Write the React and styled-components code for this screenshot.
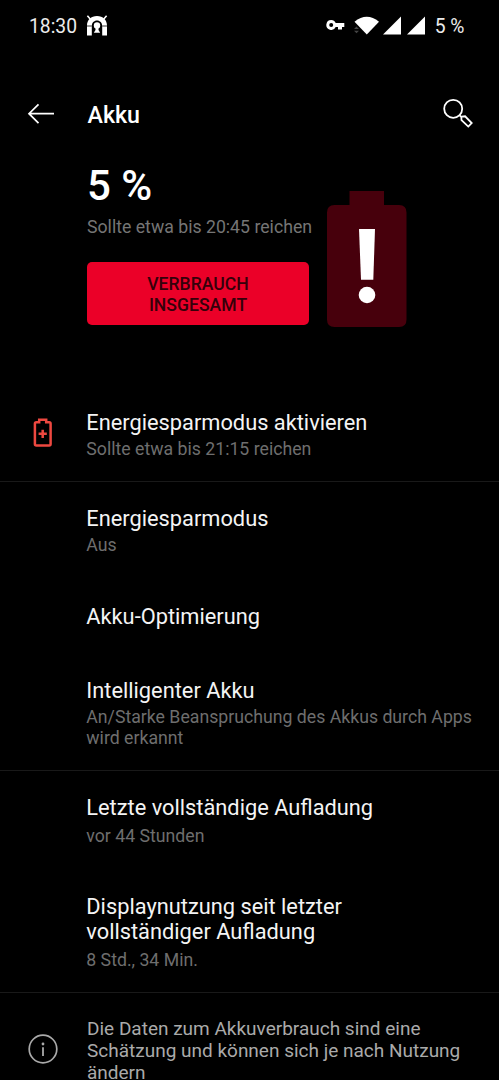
import React from "react";
import styled, { createGlobalStyle } from "styled-components";

const GlobalStyle = createGlobalStyle`
  * { box-sizing: border-box; }
  body { margin: 0; background: #000; }
`;

const Screen = styled.div`
  width: 499px;
  height: 1080px;
  overflow: hidden;
  background: #000;
  color: #fff;
  font-family: Roboto, "Liberation Sans", sans-serif;
`;

const StatusBar = styled.div`
  display: flex;
  align-items: center;
  height: 52px;
  padding: 0 34.5px 0 29px;
  font-size: 19.3px;
  color: #ececec;
`;

const Clock = styled.span`
  width: 57px;
  white-space: nowrap;
`;

const StatusIcons = styled.div`
  display: flex;
  margin-left: auto;
  margin-right: 9px;
`;

const AppBar = styled.header`
  display: flex;
  align-items: center;
  height: 62px;
  margin-top: 31px;
  padding: 0 24px 0 27px;
`;

const Title = styled.h1`
  flex: 1;
  margin: 1px 0 0 32.5px;
  font-size: 23.2px;
  font-weight: 500;
`;

const Summary = styled.section`
  display: flex;
  height: 244px;
  margin-top: 1px;
  padding-left: 87px;
`;

const SummaryText = styled.div`
  width: 240px;
  padding-top: 13px;
`;

const Percent = styled.div`
  font-size: 42px;
  line-height: 54px;
  font-weight: 500;
`;

const Remaining = styled.div`
  margin-top: 4px;
  font-size: 17.7px;
  line-height: 21px;
  color: #757575;
  white-space: nowrap;
`;

const UsageButton = styled.button`
  display: block;
  width: 222px;
  height: 63px;
  margin-top: 24px;
  padding: 2px 40px 0;
  border: 0;
  border-radius: 5px;
  background: #eb0028;
  color: #35000a;
  font: 500 17.6px/20.5px Roboto, "Liberation Sans", sans-serif;
`;

const BatteryArt = styled.svg`
  margin-top: 44px;
`;

const Group = styled.section`
  height: ${(p) => p.$height}px;
  border-bottom: 1px solid #191919;
`;

const Row = styled.div`
  display: flex;
  height: ${(p) => p.$height}px;
  padding-top: ${(p) => p.$top}px;
`;

const IconSlot = styled.div`
  flex: 0 0 ${(p) => p.$width || 86.3}px;
  padding: ${(p) => p.$top || 0}px 0 0 ${(p) => p.$left || 0}px;
`;

const RowTitle = styled.div`
  font-size: 21.8px;
  line-height: 25px;
  color: #f4f4f4;
  white-space: nowrap;
`;

const RowNote = styled.div`
  margin-top: ${(p) => p.$gap}px;
  font-size: 17.7px;
  line-height: 20.5px;
  color: #6e6e6e;
  white-space: nowrap;
`;

const InfoText = styled.div`
  font-size: 19px;
  line-height: 22px;
  color: #aaa;
  white-space: nowrap;
`;

function Setting({ height, top, gap, icon, title, note }) {
  return (
    <Row $height={height} $top={top}>
      <IconSlot $top={icon ? 8 : 0} $left={33}>{icon}</IconSlot>
      <div>
        <RowTitle>{title}</RowTitle>
        {note && <RowNote $gap={gap}>{note}</RowNote>}
      </div>
    </Row>
  );
}

const GateIcon = () => (
  <svg width="22" height="22" viewBox="0 0 22 22" fill="none">
    <path d="M1 20.5V10.5C1 5 5 1 11 1S21 5 21 10.5V20.5H16.2V11C16.2 7.6 14 5.4 11 5.4S5.8 7.6 5.8 11V20.5Z" fill="#fff" />
    <path d="M1.4 .8L4.4 4.2M20.6 .8L17.6 4.2" stroke="#fff" strokeWidth="1.6" />
    <path d="M1 11H5.8M16.2 11H21" stroke="#000" strokeWidth="0.8" />
    <circle cx="11" cy="10.4" r="3.2" fill="#fff" />
    <path d="M9.5 12H12.5V15L14.2 17.8H7.8L9.5 15Z" fill="#fff" />
  </svg>
);

const SignalIcons = () => (
  <svg width="100" height="20" viewBox="0 0 100 20" fill="#fff">
    <path fillRule="evenodd" d="M5.2 4.1A4.9 4.9 0 1 0 9.7 11H12V13.4H16V11H18.3V7H9.7A4.9 4.9 0 0 0 5.2 4.1ZM5.2 7A2 2 0 1 1 5.2 11A2 2 0 0 1 5.2 7Z" />
    <path d="M28.5 5.8Q40.8-4.2 53 5.8L40.8 18.5Z" />
    <path d="M28 13L30.5 10.4L33 13ZM28 14.7H33L30.5 17.3Z" fill="#444" />
    <path d="M57 18.5L75 0.5V18.5ZM81 18.5L99 0.5V18.5Z" />
  </svg>
);

const BackIcon = () => (
  <svg width="28" height="24" viewBox="0 0 28 24" fill="none" stroke="#fff" strokeWidth="1.7">
    <path d="M27 11.7H2M11.5 2.3L2 11.7L11.5 21.1" />
  </svg>
);

const SearchIcon = () => (
  <svg width="32" height="32" viewBox="0 0 32 32" fill="none" stroke="#fff" strokeWidth="1.8">
    <circle cx="10.2" cy="10.8" r="9" />
    <path d="M16.7 17.3L18.7 19.3M18.3 18.6L22.1 18.3L28.7 25.1L25.3 28.6L18.5 22.1Z" />
  </svg>
);

const PowerSaveIcon = () => (
  <svg width="20" height="30" viewBox="0 0 20 30" fill="none" stroke="#ee4840">
    <path d="M6.2 4.2V1.7H13.2V4.2H16.2Q17.6 4.2 17.6 5.8V26Q17.6 27.5 16.2 27.5H3.4Q1.9 27.5 1.9 26V5.8Q1.9 4.2 3.4 4.2Z" strokeWidth="2.5" />
    <path d="M5.6 15.8H13.8M9.7 11.7V19.9" strokeWidth="2.5" />
  </svg>
);

const InfoIcon = () => (
  <svg width="30" height="30" viewBox="0 0 30 30" fill="none" stroke="#aaa">
    <circle cx="15" cy="15" r="13.8" strokeWidth="1.7" />
    <path d="M15 13.2V22" strokeWidth="1.8" />
    <circle cx="15" cy="10" r="1.4" fill="#aaa" stroke="none" />
  </svg>
);

export default function App() {
  return (
    <Screen>
      <GlobalStyle />
      <StatusBar>
        <Clock>18:30</Clock>
        <GateIcon />
        <StatusIcons><SignalIcons /></StatusIcons>
        <span>5 %</span>
      </StatusBar>
      <AppBar>
        <BackIcon />
        <Title>Akku</Title>
        <SearchIcon />
      </AppBar>
      <Summary>
        <SummaryText>
          <Percent>5 %</Percent>
          <Remaining>Sollte etwa bis 20:45 reichen</Remaining>
          <UsageButton>VERBRAUCH INSGESAMT</UsageButton>
        </SummaryText>
        <BatteryArt width="80" height="138" viewBox="0 0 80 138">
          <path d="M22.5 1H57V15H72Q79.5 15 79.5 22.5V129.5Q79.5 137 72 137H7.5Q0 137 0 129.5V22.5Q0 15 7.5 15H22.5Z" fill="#47000c" />
          <path d="M32 39H48L46.3 89.7H34Z" fill="#fff" />
          <circle cx="40" cy="105" r="8.3" fill="#fff" />
        </BatteryArt>
      </Summary>
      <Group $height={92}>
        <Setting
          height={91}
          top={20}
          gap={4}
          icon={<PowerSaveIcon />}
          title="Energiesparmodus aktivieren"
          note="Sollte etwa bis 21:15 reichen"
        />
      </Group>
      <Group $height={289}>
        <Setting height={98} top={24} gap={3.5} title="Energiesparmodus" note="Aus" />
        <Setting height={73} top={24} title="Akku-Optimierung" />
        <Setting
          height={117}
          top={25}
          gap={4}
          title="Intelligenter Akku"
          note={<>An/Starke Beanspruchung des Akkus durch Apps<br />wird erkannt</>}
        />
      </Group>
      <Group $height={222}>
        <Setting height={99} top={24} gap={5.5} title="Letzte vollständige Aufladung" note="vor 44 Stunden" />
        <Setting
          height={122}
          top={24}
          gap={6}
          title={<>Displaynutzung seit letzter<br />vollständiger Aufladung</>}
          note="8 Std., 34 Min."
        />
      </Group>
      <Row $height={87} $top={25}>
        <IconSlot $width={87} $top={16} $left={28}><InfoIcon /></IconSlot>
        <InfoText>
          Die Daten zum Akkuverbrauch sind eine<br />
          Schätzung und können sich je nach Nutzung<br />
          ändern
        </InfoText>
      </Row>
    </Screen>
  );
}
